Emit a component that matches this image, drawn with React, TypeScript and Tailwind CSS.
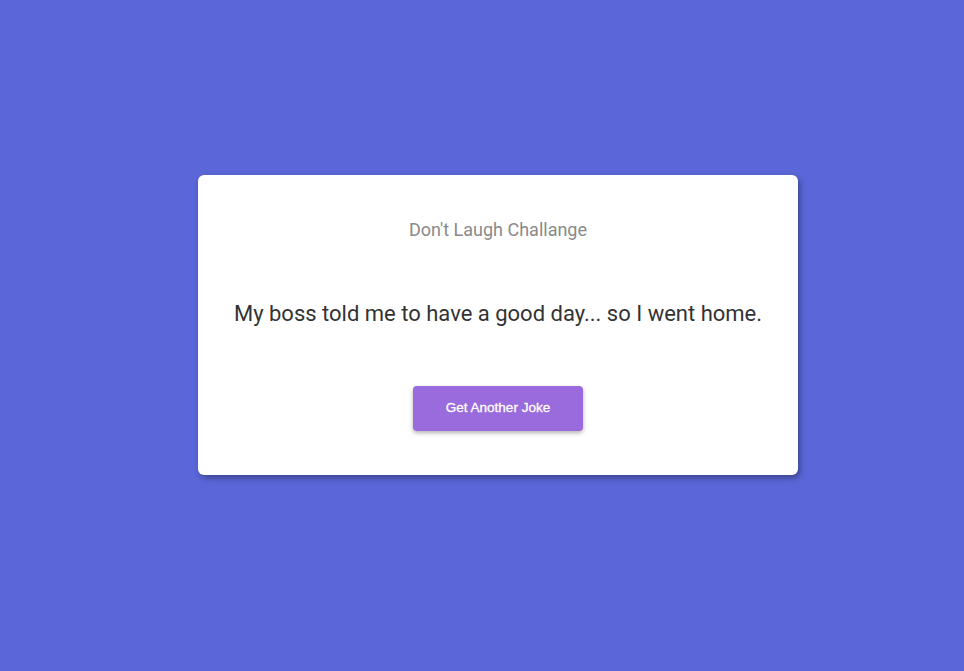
import React from "react";

const App = () => {
  return (
    <div className="min-h-[671px] w-full bg-[#5b67d8] pl-[198px] pt-[175px]">
      <div className="flex h-[300px] w-[600px] flex-col items-center rounded-md bg-white pt-[43px] shadow-[2px_3px_6px_rgba(0,0,0,0.35)] font-['Roboto',sans-serif]">
        <h1 className="text-[18px] leading-[24px] text-[#8a8a8a]">
          Don't Laugh Challange
        </h1>
        <p className="mt-[58px] text-[22px] leading-[28px] text-[#333333]">
          My boss told me to have a good day... so I went home.
        </p>
        <button className="mt-[58px] h-[45px] w-[170px] rounded bg-[#9a6bdc] font-['Liberation_Sans',Arial,sans-serif] text-[13.5px] font-normal text-white [-webkit-text-stroke:0.3px_#ffffff] shadow-[0_2px_4px_rgba(0,0,0,0.3)]">
          Get Another Joke
        </button>
      </div>
    </div>
  );
};

export default App;
